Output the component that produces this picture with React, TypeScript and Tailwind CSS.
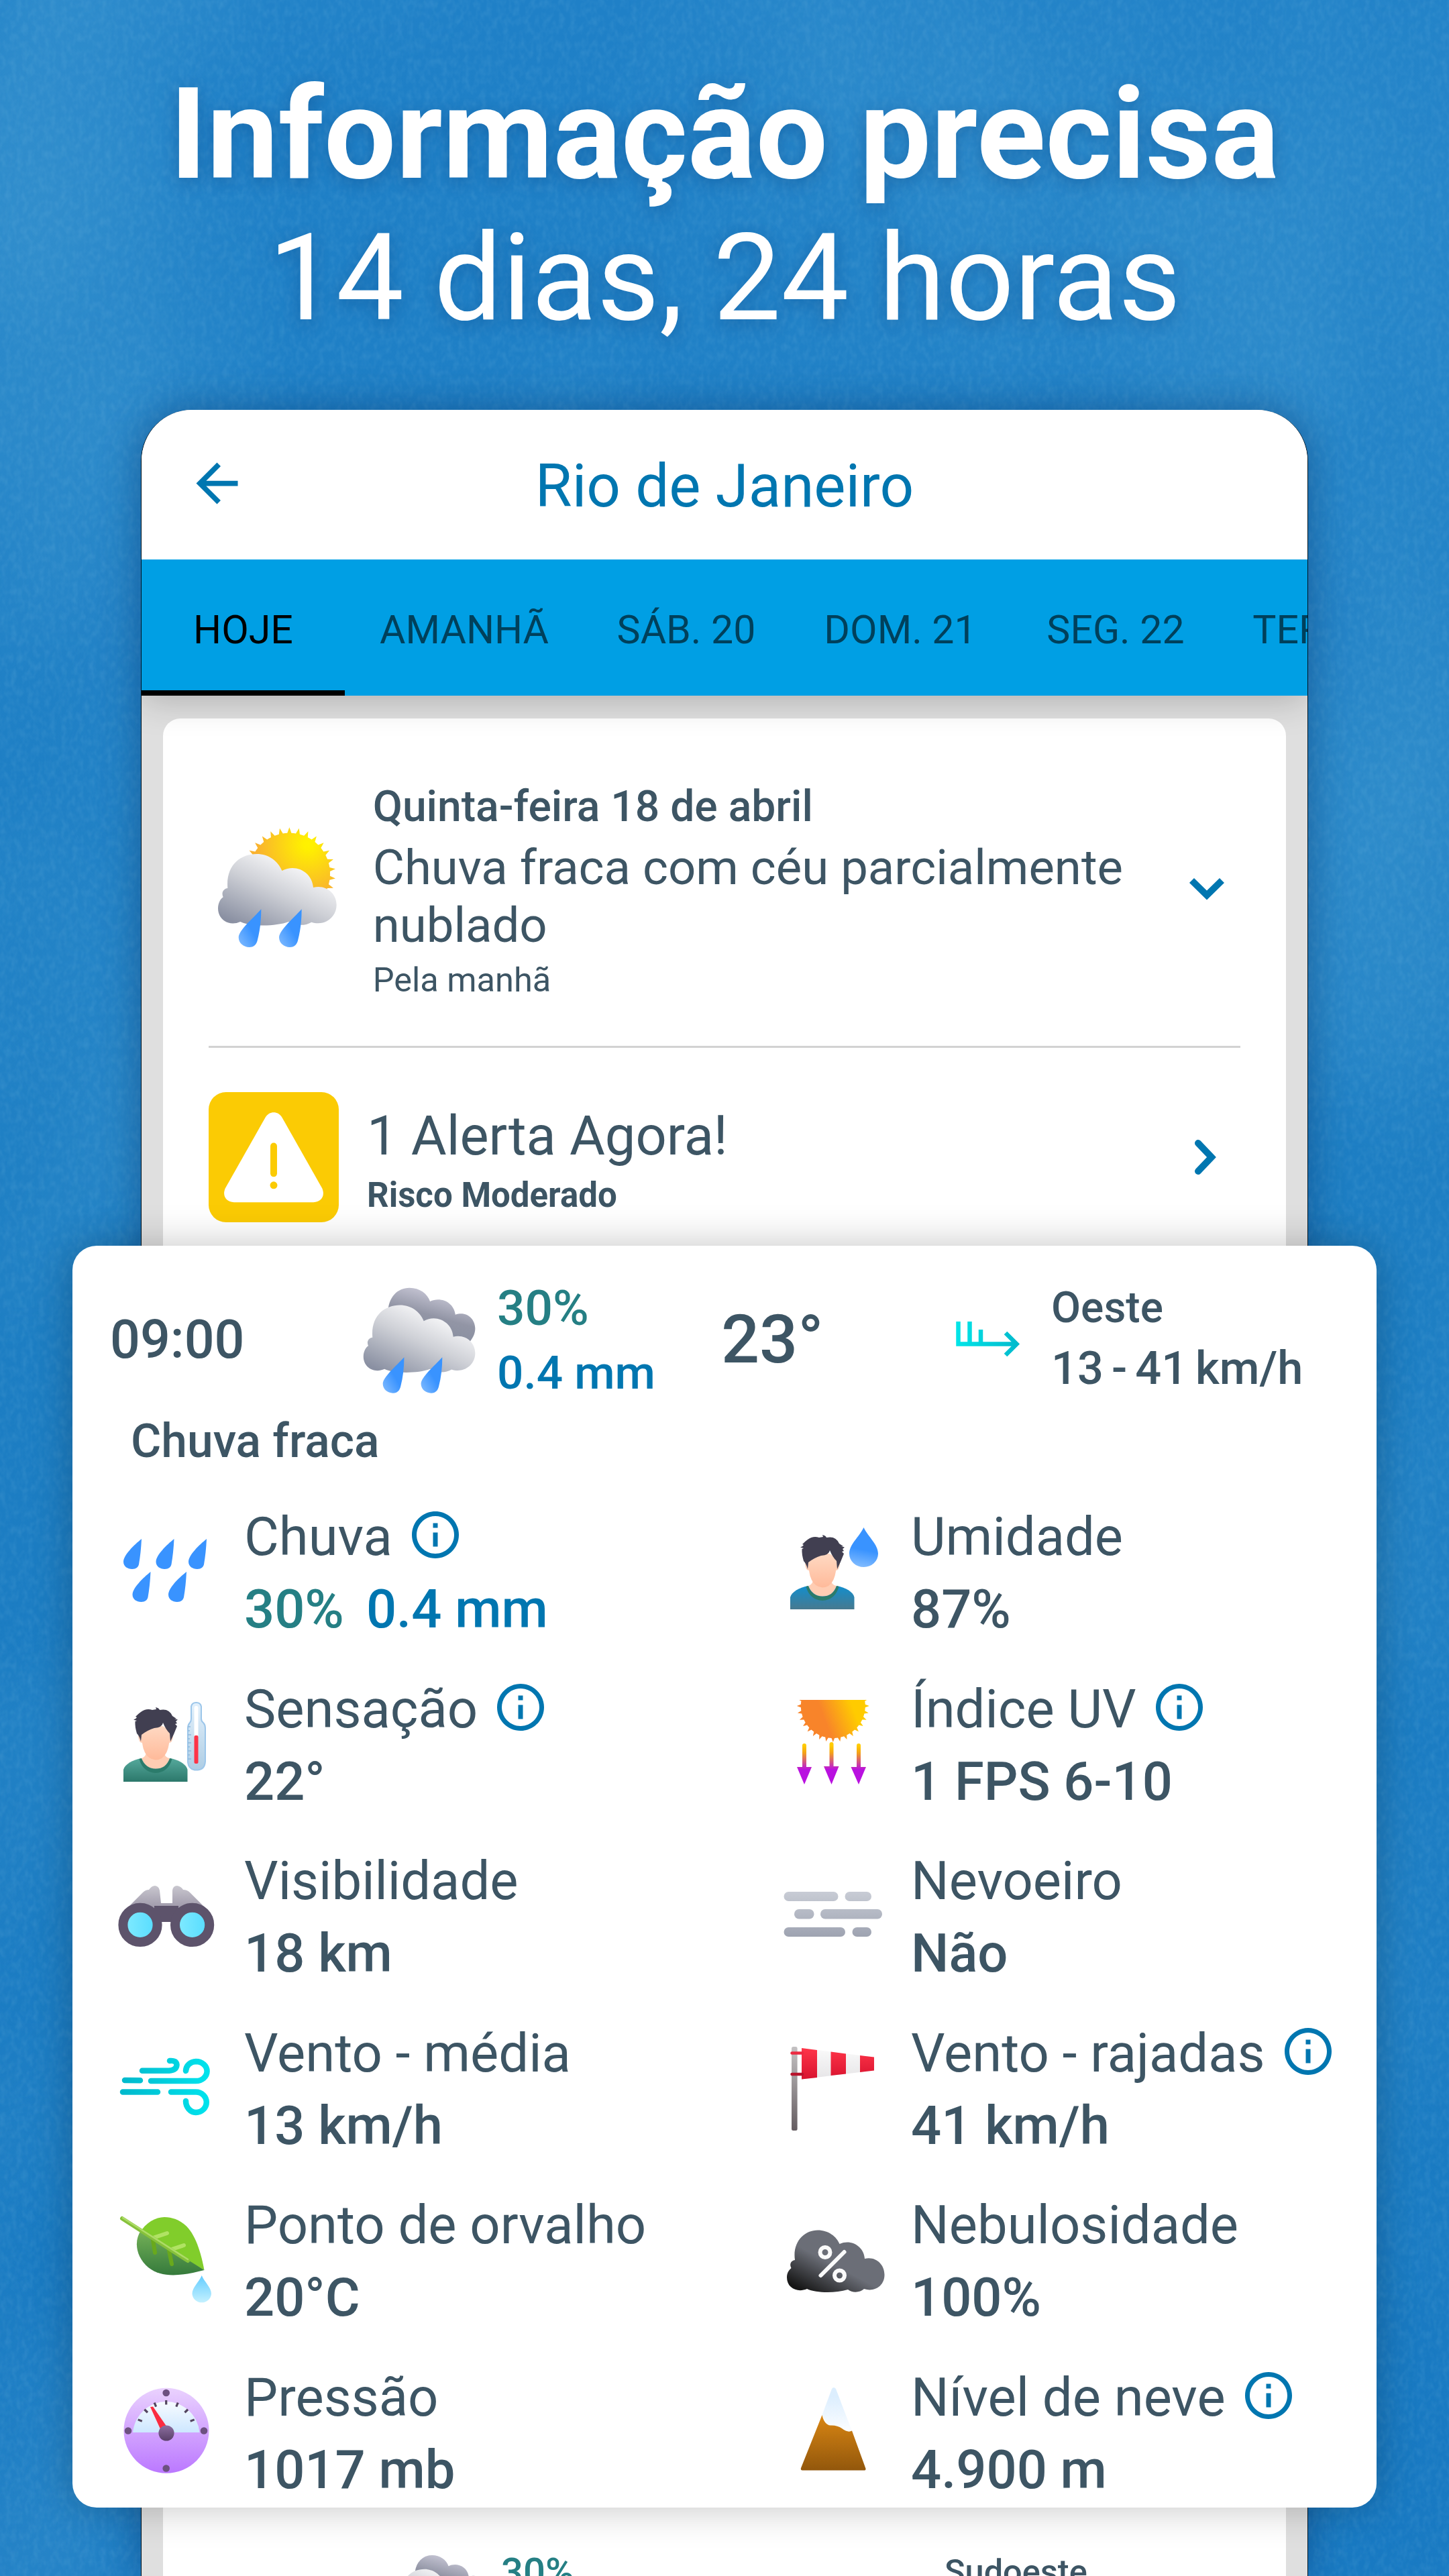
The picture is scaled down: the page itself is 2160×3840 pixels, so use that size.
import type { ReactNode } from "react"

const DROP = "M49 51C38 60 22 75 22 85C22 92 28 96 35 96C41 96 44 93 45 89Q48 72 49 51Z"

const DAYS = [
  { label: "HOJE", width: "w-[303px]" },
  { label: "AMANHÃ", width: "w-[356px]" },
  { label: "SÁB. 20", width: "w-[306px]" },
  { label: "DOM. 21", width: "w-[332px]" },
  { label: "SEG. 22", width: "w-[310px]" },
  { label: "TER. 23", width: "w-[300px]" },
]

// points of a disc with sharp little rays
function sunPoints(cx: number, cy: number, inner: number, outer: number, rays: number) {
  const points: string[] = []
  const step = (Math.PI * 2) / rays
  for (let i = 0; i < rays; i++) {
    const a = i * step - Math.PI / 2
    points.push(`${cx + Math.cos(a) * outer},${cy + Math.sin(a) * outer}`)
    for (const off of [0.24, 0.5, 0.76]) {
      const b = a + step * off
      points.push(`${cx + Math.cos(b) * inner},${cy + Math.sin(b) * inner}`)
    }
  }
  return points.join(" ")
}

function Backdrop() {
  return (
    <svg className="absolute inset-0" width="2160" height="3840" viewBox="0 0 2160 3840">
      <defs>
        <linearGradient id="sky" x1="0" y1="0" x2="0" y2="1">
          <stop offset="0" stopColor="#1f80c7" />
          <stop offset="0.5" stopColor="#1d7ec3" />
          <stop offset="1" stopColor="#1879c2" />
        </linearGradient>
        <radialGradient id="patch">
          <stop offset="0" stopColor="#3d97cf" stopOpacity="0.5" />
          <stop offset="1" stopColor="#3d97cf" stopOpacity="0" />
        </radialGradient>
        <filter id="paper" x="0" y="0" width="100%" height="100%">
          <feTurbulence type="fractalNoise" baseFrequency="0.12 0.08" numOctaves="2" seed="4" />
          <feColorMatrix values="0 0 0 0 0.4  0 0 0 0 0.7  0 0 0 0 0.86  0.7 0 0 0 -0.27" />
        </filter>
        <filter id="clouds" x="0" y="0" width="100%" height="100%">
          <feTurbulence type="fractalNoise" baseFrequency="0.002 0.0012" numOctaves="3" seed="11" />
          <feColorMatrix values="0 0 0 0 0.2  0 0 0 0 0.57  0 0 0 0 0.8  1.4 0 0 0 -0.55" />
        </filter>
      </defs>
      <rect width="2160" height="3840" fill="url(#sky)" />
      <ellipse cx="0" cy="300" rx="330" ry="900" fill="url(#patch)" opacity="0.7" />
      <ellipse cx="1700" cy="300" rx="900" ry="550" fill="url(#patch)" opacity="0.45" />
      <ellipse cx="2100" cy="1150" rx="260" ry="500" fill="url(#patch)" />
      <rect width="2160" height="3840" filter="url(#clouds)" opacity="0.22" />
      <rect width="2160" height="3840" filter="url(#paper)" opacity="0.3" />
    </svg>
  )
}

function WeatherIcon({ sunny = false, className }: { sunny?: boolean; className: string }) {
  return (
    <svg className={className} viewBox={sunny ? "60 90 560 560" : "60 125 560 520"}>
      <defs>
        <linearGradient id="cloud" x1="0.12" y1="0.95" x2="0.75" y2="0.15">
          <stop offset="0" stopColor="#8a90a2" />
          <stop offset="0.55" stopColor="#ced0d6" />
          <stop offset="1" stopColor="#fbfbfc" />
        </linearGradient>
        <linearGradient id="cloudBack" x1="0.3" y1="0.75" x2="0.6" y2="0.05">
          <stop offset="0" stopColor="#8a90a1" />
          <stop offset="0.4" stopColor="#9295a5" />
          <stop offset="1" stopColor="#cac9d8" />
        </linearGradient>
        <radialGradient id="sun" gradientUnits="userSpaceOnUse" cx="475" cy="175" r="230">
          <stop offset="0" stopColor="#fff200" />
          <stop offset="0.1" stopColor="#fff000" />
          <stop offset="1" stopColor="#f9b22f" />
        </radialGradient>
        <linearGradient id="rain" x1="0" y1="1" x2="0.6" y2="0.4">
          <stop offset="0" stopColor="#84bdff" />
          <stop offset="0.85" stopColor="#3993ff" />
        </linearGradient>
      </defs>
      {sunny ? (
        <polygon points={sunPoints(391, 307, 182, 207, 30)} fill="url(#sun)" />
      ) : (
        <path
          d="M188 260C188 180 235 137 290 137C340 137 375 165 388 201C440 178 500 205 508 264C562 245 602 285 602 330C602 355 590 375 577 392L300 400Z"
          fill="url(#cloudBack)"
        />
      )}
      <path
        d="M115 372C106 270 172 219 245 219C298 219 340 250 358 294C420 260 493 300 498 369C556 355 602 396 602 447C602 503 548 543 490 524C460 542 420 540 388 522C330 544 215 544 172 522C120 545 72 512 72 463C72 440 82 420 95 412C85 390 98 374 115 372Z"
        fill="url(#cloud)"
      />
      <path d="M265 466C230 505 164 560 164 592C164 618 186 636 212 636C234 636 244 622 248 606C260 560 265 515 265 466Z" fill="url(#rain)" />
      <path d="M446 466C411 505 345 560 345 592C345 618 367 636 393 636C415 636 425 622 429 606C441 560 446 515 446 466Z" fill="url(#rain)" />
    </svg>
  )
}

function InfoIcon() {
  return (
    <svg className="ml-[22px] size-[84px] -translate-y-[3px] fill-[#0076b0]" viewBox="0 0 24 24">
      <path d="M11 7h2v2h-2zm0 4h2v6h-2zm1-9C6.48 2 2 6.48 2 12s4.48 10 10 10 10-4.48 10-10S17.52 2 12 2zm0 18c-4.41 0-8-3.59-8-8s3.59-8 8-8 8 3.59 8 8-3.59 8-8 8z" />
    </svg>
  )
}

function Person({ shirt }: { shirt: string }) {
  return (
    <>
      <defs>
        <linearGradient id="shirtGreen" x1="0" y1="0" x2="0" y2="1">
          <stop offset="0" stopColor="#55a99c" />
          <stop offset="1" stopColor="#2c786b" />
        </linearGradient>
        <linearGradient id="shirtBlue" x1="0" y1="0" x2="0" y2="1">
          <stop offset="0" stopColor="#128ecd" />
          <stop offset="1" stopColor="#47798f" />
        </linearGradient>
        <linearGradient id="skin" x1="0" y1="0" x2="0" y2="1">
          <stop offset="0" stopColor="#ffdac4" />
          <stop offset="1" stopColor="#ffba9a" />
        </linearGradient>
      </defs>
      <path d="M22 156V138C24 130 36 123 49 121H91C104 123 116 130 117.500 138V156Z" fill={shirt} />
      <path d="M49 121Q54 136 70 137Q86 136 91 121L94.500 122Q89 142 70 143Q51 142 45.500 122Z" fill="#2b7b6b" />
      <path d="M49 121C56 119 56 112 56 112H83C83 117 86 120 91 121C87 132 80 136.500 70 136.500C60 136.500 53 131 49 121Z" fill="#ffcdb3" />
      <path d="M44 88L50 86V98Q45 98 44 88ZM96 88L90 86V98Q95 98 96 88Z" fill="#ffd0b8" />
      <path d="M49 80Q70 62 91 80Q92 123 70 123.500Q48 122 49 80Z" fill="url(#skin)" />
      <path
        d="M48 96Q46 88 42 84Q39 74 39.500 66L42 65L37 63.500Q41 62 42 60L40 59Q45 54 48 52Q56 46 65 49L71 48L70 45Q75 46 76 49Q90 46 95 58L101 62L98 62L103 63.500L100 66L102 69L99 70L102 73Q97 86 92 96L91 84Q85 78 81 68Q80 75 68 76Q58 79 49 86Z"
        fill="#413f51"
      />
    </>
  )
}

function Icon({ children }: { children: ReactNode }) {
  return (
    <svg className="size-[200px] shrink-0" viewBox="0 0 200 200">
      {children}
    </svg>
  )
}

const RainDrops = (
  <Icon>
    <g fill="#3993ff">
      <path d={DROP} />
      <path d={DROP} transform="translate(48.500)" />
      <path d={DROP} transform="translate(97)" />
      <path d={DROP} transform="translate(13.500 49)" />
      <path d={DROP} transform="translate(67 49)" />
    </g>
  </Icon>
)

const Humidity = (
  <Icon>
    <defs>
      <linearGradient id="waterDrop" x1="0.4" y1="0.3" x2="0.3" y2="1">
        <stop offset="0.35" stopColor="#3993ff" />
        <stop offset="1" stopColor="#84bdff" />
      </linearGradient>
    </defs>
    <Person shirt="url(#shirtBlue)" />
    <path d="M131.500 34C138 48 153 59 153 73A21.500 20 0 0 1 110 73C110 59 125 48 131.500 34Z" fill="url(#waterDrop)" />
  </Icon>
)

const FeelsLike = (
  <Icon>
    <defs>
      <linearGradient id="glass" x1="0" y1="0" x2="0" y2="1">
        <stop offset="0" stopColor="#e3f1fc" />
        <stop offset="1" stopColor="#aecde4" />
      </linearGradient>
    </defs>
    <Person shirt="url(#shirtGreen)" />
    <path
      d="M123 44Q124 38 130.500 38Q137 38 138 44V62Q138 66 141 68Q144 71 144 76V126Q143 138 133 138.500H128Q119 137 118 127V76Q118 71 121 68Q123 66 123 62Z"
      fill="url(#glass)"
      stroke="#9cc6ea"
      strokeWidth="2"
    />
    <path d="M118 74h4M118 80h3M118 86h5M118 92h3M118 98h5M118 104h3M118 110h5M118 116h3M118 122h5" stroke="#8db9dd" strokeWidth="1.500" />
    <rect x="127.500" y="43" width="6" height="48" rx="3" fill="#fff" />
    <rect x="127.500" y="87" width="6" height="42" rx="2" fill="#fd3347" />
  </Icon>
)

const UvIndex = (
  <Icon>
    <defs>
      <linearGradient id="uvSun" x1="0.35" y1="0.6" x2="0.75" y2="0.45">
        <stop offset="0" stopColor="#f8842a" />
        <stop offset="1" stopColor="#ffcb00" />
      </linearGradient>
      <linearGradient id="uvRay" gradientUnits="userSpaceOnUse" x1="0" y1="102" x2="0" y2="138">
        <stop offset="0" stopColor="#fc0" />
        <stop offset="0.3" stopColor="#f4a317" />
        <stop offset="1" stopColor="#b911e0" />
      </linearGradient>
      <clipPath id="lowerHalf">
        <rect x="0" y="34" width="200" height="100" />
      </clipPath>
    </defs>
    <polygon points={sunPoints(85.8, 43, 48, 54, 32)} fill="url(#uvSun)" clipPath="url(#lowerHalf)" />
    <g fill="url(#uvRay)">
      <path d="M40 102a3 3 0 0 1 6 0V134H54L43 160L32 134H40Z" />
      <path d="M80.500 100a3 3 0 0 1 6 0V133H94.500L83.500 160L72 133H80.500Z" />
      <path d="M121 102a3 3 0 0 1 6 0V134H135L124 160L112.500 134H121Z" />
    </g>
  </Icon>
)

const Binoculars = (
  <Icon>
    <defs>
      <linearGradient id="barrel" x1="0" y1="0" x2="0" y2="1">
        <stop offset="0" stopColor="#c9c7cf" />
        <stop offset="1" stopColor="#8f889c" />
      </linearGradient>
      <linearGradient id="lens">
        <stop offset="0" stopColor="#83ebff" />
        <stop offset="1" stopColor="#54dcff" />
      </linearGradient>
    </defs>
    <path
      d="M30 86L51 65Q55 61 60 61Q64 55 69 55Q75 56 76 62L78 81H95V62Q96 55 102 55Q108 56 111 61Q117 61 121 65L142 86L100 100H70Z"
      fill="url(#barrel)"
    />
    <rect x="68" y="85" width="36" height="24" fill="#5d536b" />
    <g fill="url(#lens)" stroke="#5d536b" strokeWidth="14">
      <circle cx="47" cy="113.400" r="25.600" />
      <circle cx="124.600" cy="113.400" r="25.600" />
    </g>
  </Icon>
)

const Fog = (
  <Icon>
    <defs>
      <linearGradient id="fog" gradientUnits="userSpaceOnUse" x1="0" y1="64" x2="0" y2="131">
        <stop offset="0" stopColor="#c8ccd5" />
        <stop offset="1" stopColor="#9ea3b1" />
      </linearGradient>
    </defs>
    <g fill="url(#fog)">
      <rect x="12.500" y="64" width="81" height="14" rx="7" />
      <rect x="103.500" y="64" width="39.500" height="14" rx="7" />
      <rect x="28" y="90" width="29.500" height="14.500" rx="7" />
      <rect x="67" y="90" width="92" height="14.500" rx="7" />
      <rect x="12.500" y="117" width="91.500" height="14" rx="7" />
      <rect x="114.500" y="117" width="28.500" height="14" rx="7" />
    </g>
  </Icon>
)

const Wind = (
  <Icon>
    <defs>
      <linearGradient id="wind" gradientUnits="userSpaceOnUse" x1="19" y1="0" x2="146" y2="0">
        <stop offset="0" stopColor="#00b9cc" />
        <stop offset="1" stopColor="#00e2ec" />
      </linearGradient>
    </defs>
    <g fill="none" stroke="url(#wind)" strokeWidth="8.500" strokeLinecap="round">
      <path d="M50 73.700H90Q101 73 101.500 65Q101 58 91 59" />
      <path d="M63 89.100H130A16.500 14.500 0 0 0 130 60A15.500 14.500 0 0 0 115 74" />
      <path d="M24 88.100L47 88.200" />
      <path d="M21 105.500L73 105.600" />
      <path d="M93 105.500H130A15.500 15 0 0 1 130 136A15.500 17 0 0 1 115 119" />
    </g>
  </Icon>
)

const Windsock = (
  <Icon>
    <defs>
      <linearGradient id="pole" x1="0" y1="0" x2="0" y2="1">
        <stop offset="0" stopColor="#c4c2c3" />
        <stop offset="1" stopColor="#645c60" />
      </linearGradient>
      <linearGradient id="sock" x1="0" y1="0" x2="0" y2="1">
        <stop offset="0" stopColor="#ff3549" />
        <stop offset="1" stopColor="#d8132f" />
      </linearGradient>
      <linearGradient id="sockWhite" x1="0" y1="0" x2="0" y2="1">
        <stop offset="0" stopColor="#fafafa" />
        <stop offset="1" stopColor="#e6e5e7" />
      </linearGradient>
    </defs>
    <rect x="24" y="38" width="8.600" height="125" rx="2.500" fill="url(#pole)" />
    <path d="M39 40L147 53.500V73.500L39 86.500Z" fill="url(#sockWhite)" />
    <path d="M39 40L62 43V84L39 86.500ZM82.500 45.500L105 48.500V78.500L82.500 81ZM126 51L147 53.500V73.500L126 76Z" fill="url(#sock)" />
    <path d="M24.500 47.500H40" stroke="#ec2a41" strokeWidth="4.500" strokeLinecap="round" />
    <path d="M24.500 79H40" stroke="#b8142c" strokeWidth="4.500" strokeLinecap="round" />
  </Icon>
)

const Leaf = (
  <Icon>
    <defs>
      <linearGradient id="leafDark" x1="0" y1="0" x2="0" y2="1">
        <stop offset="0" stopColor="#74b157" />
        <stop offset="1" stopColor="#357a3c" />
      </linearGradient>
      <linearGradient id="dew" x1="0" y1="0" x2="0" y2="1">
        <stop offset="0" stopColor="#62ccff" />
        <stop offset="1" stopColor="#c4f1ff" />
      </linearGradient>
    </defs>
    <path d="M46 60C55 44 70 36 83 36C118 37 133 66 142.500 115Z" fill="#81cd2b" />
    <path d="M48 56C37 72 41 96 59 111C79 127 108 124 142.500 115Z" fill="url(#leafDark)" />
    <path d="M66 70L69 89M90 86L94 106" stroke="#69a91c" strokeWidth="6" strokeLinecap="round" />
    <path d="M66 67L87 60M94 84L112 78" stroke="#b0e363" strokeWidth="6" strokeLinecap="round" />
    <path d="M20 38L118 101" stroke="#86c13b" strokeWidth="6" strokeLinecap="round" />
    <path d="M21 37L118 99" stroke="#addc66" strokeWidth="2.500" strokeLinecap="round" />
    <path d="M138.700 123C143 133 153 141 153 150.500A14.300 14 0 0 1 124.500 150.500C124.500 141 134.500 133 138.700 123Z" fill="url(#dew)" />
  </Icon>
)

const Cloudiness = (
  <Icon>
    <defs>
      <linearGradient id="darkCloud" x1="0.02" y1="0.85" x2="0.35" y2="0.45">
        <stop offset="0" stopColor="#161616" />
        <stop offset="1" stopColor="#6b6e77" />
      </linearGradient>
    </defs>
    <path
      d="M29 100C25 73 43 55.500 63 55.500C79 55.500 91 65 95.500 76C113 68 132 80 133 98C149 94 162.500 106 162.500 122C162.500 139 147 148 132 143C126 149 114 149 108 144C88 150 60 149 47 143C33 149 17 142 17 126C17 119 20 115 23.500 112C20 105 24 101 29 100Z"
      fill="url(#darkCloud)"
    />
    <g fill="none" stroke="#fafafa" strokeWidth="6" strokeLinecap="round">
      <circle cx="74" cy="88.500" r="7.500" />
      <circle cx="95.500" cy="123" r="7.500" />
      <path d="M102.500 88L67.500 123" />
    </g>
  </Icon>
)

const Pressure = (
  <Icon>
    <defs>
      <linearGradient id="gauge" x1="0" y1="0" x2="0" y2="1">
        <stop offset="0" stopColor="#ead2fe" />
        <stop offset="1" stopColor="#bb78ff" />
      </linearGradient>
      <linearGradient id="dial" x1="0" y1="0" x2="0" y2="1">
        <stop offset="0" stopColor="#f7fbff" />
        <stop offset="1" stopColor="#cde7ff" />
      </linearGradient>
      <linearGradient id="pivot" x1="0" y1="0" x2="0" y2="1">
        <stop offset="0" stopColor="#8c6fa0" />
        <stop offset="1" stopColor="#594068" />
      </linearGradient>
    </defs>
    <circle cx="86" cy="97.300" r="63.500" fill="url(#gauge)" />
    <path d="M36 100A50 51 0 0 1 135.500 100Z" fill="url(#dial)" />
    <g fill="#6d5180">
      <circle cx="85.700" cy="41" r="5.300" />
      <circle cx="29" cy="97.500" r="5.300" />
      <circle cx="142" cy="97.500" r="5.300" />
      <circle cx="85.700" cy="153.500" r="5.300" />
    </g>
    <g stroke="#53455f" strokeWidth="3.200">
      {[-69, -46, -23, 0, 23, 46, 69].map((angle) => (
        <path key={angle} d="M85.700 52V58.500" transform={`rotate(${angle} 85.700 97)`} />
      ))}
    </g>
    <path d="M62 62L66 61.500L87 92L78 97Z" fill="#fb2c40" />
    <circle cx="86" cy="101" r="11.600" fill="url(#pivot)" />
  </Icon>
)

const Mountain = (
  <Icon>
    <defs>
      <linearGradient id="rock" x1="0" y1="0" x2="0" y2="1">
        <stop offset="0" stopColor="#d98613" />
        <stop offset="1" stopColor="#92570c" />
      </linearGradient>
      <linearGradient id="snow" x1="0" y1="0" x2="0" y2="1">
        <stop offset="0.200" stopColor="#dceefe" />
        <stop offset="1" stopColor="#fdfeff" />
      </linearGradient>
    </defs>
    <path d="M69.500 74L84 35Q86.700 31 90 35L114 98L109 100L80 92Z" fill="url(#snow)" />
    <path d="M69.500 74Q73 89 82 89.500Q92 89 99 94Q108 101 114 97.500L134.500 154Q135 156.500 132 156.500H40Q37 156.500 38 153Z" fill="url(#rock)" />
  </Icon>
)

type Metric = { icon: ReactNode; label: string; value: ReactNode; info?: boolean }

const METRICS: Metric[] = [
  {
    icon: RainDrops,
    label: "Chuva",
    info: true,
    value: (
      <>
        <span className="text-[#257f84]">30%</span>
        <span className="ml-[33px] text-[#0076b0]">0.4 mm</span>
      </>
    ),
  },
  { icon: Humidity, label: "Umidade", value: "87%" },
  { icon: FeelsLike, label: "Sensação", value: "22°", info: true },
  { icon: UvIndex, label: "Índice UV", value: "1 FPS 6-10", info: true },
  { icon: Binoculars, label: "Visibilidade", value: "18 km" },
  { icon: Fog, label: "Nevoeiro", value: "Não" },
  { icon: Wind, label: "Vento - média", value: "13 km/h" },
  { icon: Windsock, label: "Vento - rajadas", value: "41 km/h", info: true },
  { icon: Leaf, label: "Ponto de orvalho", value: "20°C" },
  { icon: Cloudiness, label: "Nebulosidade", value: "100%" },
  { icon: Pressure, label: "Pressão", value: "1017 mb" },
  { icon: Mountain, label: "Nível de neve", value: "4.900 m", info: true },
]

function MetricCell({ icon, label, value, info }: Metric) {
  return (
    <div className="flex items-start whitespace-nowrap">
      {icon}
      <div className="ml-[2px]">
        <div className="flex h-[96px] items-center text-[79.600px] leading-[96px]">
          {label}
          {info && <InfoIcon />}
        </div>
        <div className="mt-[12px] text-[79.500px] leading-[96px] font-medium">{value}</div>
      </div>
    </div>
  )
}

function WindBarb() {
  return (
    <svg className="mt-[109px] h-[60px] w-[100px]" viewBox="0 0 100 60">
      <defs>
        <linearGradient id="barb" gradientUnits="userSpaceOnUse" x1="0" y1="0" x2="95" y2="0">
          <stop offset="0" stopColor="#00e5e8" />
          <stop offset="1" stopColor="#00b9cc" />
        </linearGradient>
      </defs>
      <path d="M3.500 4V37.500H91M20.500 4V37M37 16V37M74 21L90.500 37.500L74 54" fill="none" stroke="url(#barb)" strokeWidth="6.500" />
    </svg>
  )
}

function HourCard() {
  return (
    <section className="absolute top-[1857px] left-[108px] z-20 h-[1881px] w-[1944px] rounded-[36px] bg-white pl-[54px] shadow-[0_0_60px_rgba(0,0,0,0.24)]">
      <div className="grid h-[252px] grid-cols-[376px_203px_334px_350px_142px_1fr] font-medium whitespace-nowrap">
        <span className="pt-[95px] pl-[2px] text-[79px] leading-[90px]">09:00</span>
        <WeatherIcon className="mt-[59px] h-[163.500px] w-[176px]" />
        <div className="pt-[51px]">
          <div className="text-[73px] leading-[84px] text-[#257f84]">30%</div>
          <div className="mt-[13px] text-[69.300px] leading-[84px] text-[#0076b0]">0.4 mm</div>
        </div>
        <span className="pt-[85px] text-[100.500px] leading-[110px]">23°</span>
        <WindBarb />
        <div className="pt-[57px]">
          <div className="text-[64px] leading-[72px]">Oeste</div>
          <div className="mt-[14px] text-[68.500px] leading-[80px] [word-spacing:-5px]">13 - 41 km/h</div>
        </div>
      </div>
      <div className="pl-[33px] text-[69.500px] leading-[80px] font-medium">Chuva fraca</div>
      <div className="mt-[54px] grid auto-rows-[256.5px] grid-cols-[994px_1fr]">
        {METRICS.map((metric) => (
          <MetricCell key={metric.label} {...metric} />
        ))}
      </div>
    </section>
  )
}

function Phone() {
  return (
    <div className="mt-[91px] ml-[210px] flex h-[3229px] w-[1740px] flex-col overflow-hidden rounded-t-[76px] border-x border-[#00131f] bg-[#dfdfdf]">
      <header className="z-20 grid h-[223px] shrink-0 grid-cols-[1fr_auto_1fr] items-center bg-white text-[#0076b0]">
        <svg className="mb-[4px] ml-[66px] size-[93px] fill-[#0076b0]" viewBox="0 0 24 24">
          <path d="M20 11H7.830l5.590-5.590L12 4l-8 8 8 8 1.410-1.410L7.830 13H20v-2z" />
        </svg>
        <h2 className="pt-[4px] text-[89px] leading-[106px]">Rio de Janeiro</h2>
      </header>

      <nav className="z-10 flex h-[203px] shrink-0 bg-[#009fe4] text-[59px] text-[#00405b] shadow-[0_6px_50px_rgba(0,0,0,0.22)]">
        {DAYS.map(({ label, width }, i) => (
          <div
            key={label}
            className={`${width} flex shrink-0 items-center justify-center border-b-8 pt-[15px] ${i === 0 ? "border-black text-black" : "border-transparent"}`}
          >
            {label}
          </div>
        ))}
      </nav>

      <main className="mx-[32px] mt-[34px] flex grow flex-col rounded-t-[26px] bg-white px-[68px]">
        <div className="flex h-[491px] shrink-0 items-start border-b-3 border-[#d2d2d2]">
          <WeatherIcon sunny className="mt-[159px] ml-[10px] size-[186.700px]" />
          <div className="ml-[48px] w-[1218px] pt-[95px]">
            <div className="text-[64.200px] leading-[72px] font-medium">Quinta-feira 18 de abril</div>
            <div className="mt-[13px] text-[72.500px] leading-[86px]">
              Chuva fraca com céu parcialmente
              <br />
              nublado
            </div>
            <div className="mt-[8px] text-[50.500px] leading-[60px]">Pela manhã</div>
          </div>
          <svg className="mt-[233px] -ml-[5px] h-[40px] w-[60px]" viewBox="0 0 60 40">
            <path d="M7.500 8.500L30 30.500L52.500 8.500" fill="none" stroke="#0076b0" strokeWidth="10" />
          </svg>
        </div>

        <div className="flex items-start pt-[66px]">
          <svg className="size-[194px]" viewBox="0 0 195 195">
            <rect width="195" height="195" rx="26" fill="#fbcb04" />
            <path
              d="M85 38C91 28 104 28 110 38L170 144C175 155 169 165 157 165H38C26 165 20 155 25 144Z"
              fill="#fff"
            />
            <path d="M97.500 81V122" stroke="#fbcb04" strokeWidth="10" strokeLinecap="round" />
            <circle cx="97.500" cy="139.500" r="5.500" fill="#fbcb04" />
          </svg>
          <div className="ml-[42px] w-[1230px] pt-[21px]">
            <div className="text-[81.200px] leading-[90px]">1 Alerta Agora!</div>
            <div className="mt-[13px] text-[51px] leading-[60px] font-bold">Risco Moderado</div>
          </div>
          <svg className="mt-[66px] h-[62px] w-[40px]" viewBox="0 0 40 62">
            <path d="M9 10L29 31L9 52" fill="none" stroke="#0076b0" strokeWidth="10" strokeLinecap="round" />
          </svg>
        </div>

        <div className="mt-auto flex h-[40px] items-start whitespace-nowrap">
          <WeatherIcon className="mt-[6px] ml-[275px] h-[131px] w-[141px] shrink-0" />
          <span className="ml-[20px] w-[661px] shrink-0 text-[58px] leading-[68px] font-medium text-[#257f84]">30%</span>
          <span className="mt-[5px] text-[50.500px] leading-[58px] font-medium">Sudoeste</span>
        </div>
      </main>
    </div>
  )
}

export default function App() {
  return (
    <div className="relative h-[3840px] w-[2160px] overflow-hidden bg-[#1f81c6] font-['Roboto',sans-serif] text-[#3d5564]">
      <Backdrop />
      <div className="relative">
        <div className="pt-[91px] text-center text-white [text-shadow:0_6px_24px_rgba(0,50,110,0.3)]">
          <h1 className="text-[190px] leading-[219px] font-bold">Informação precisa</h1>
          <p className="text-[180px] leading-[210px]">14 dias, 24 horas</p>
        </div>
        <div className="drop-shadow-[0_0_30px_rgba(0,30,80,0.4)]">
          <Phone />
        </div>
      </div>
      <HourCard />
    </div>
  )
}
